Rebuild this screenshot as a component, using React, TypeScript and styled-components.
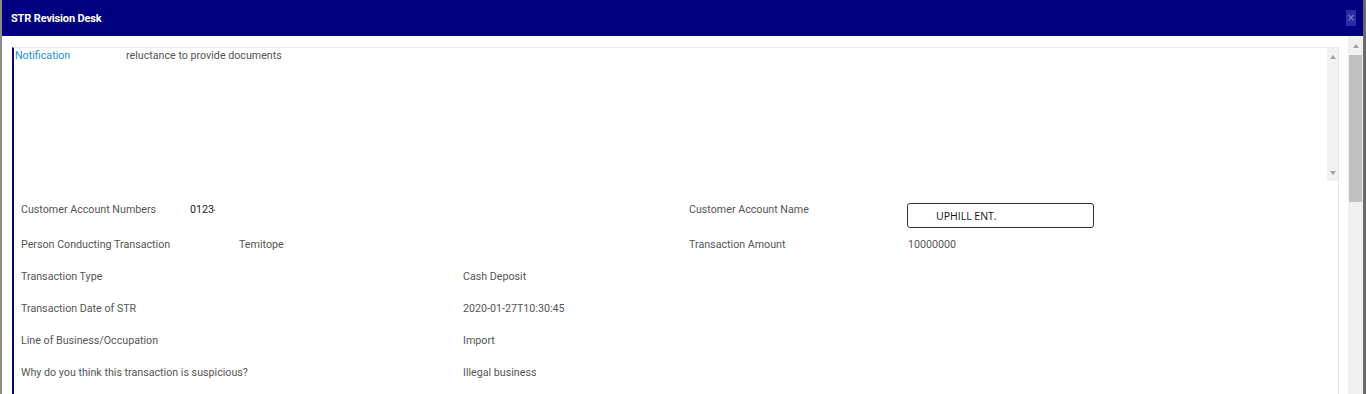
import React from "react";
import styled, { createGlobalStyle } from "styled-components";

const Global = createGlobalStyle`
  html, body { margin: 0; padding: 0; background: #ffffff; }
  body { font-family: Roboto, "Liberation Sans", Arial, sans-serif; }
  * { box-sizing: border-box; }
`;

const Window = styled.div`
  width: 1366px;
  height: 394px;
  display: flex;
  flex-direction: column;
  overflow: hidden;
  border-left: 2px solid #8c8c8c;
  border-right: 3px solid #6a6a6a;
  background: #ffffff;
`;

const Header = styled.header`
  height: 36px;
  flex: none;
  background: #000080;
  display: flex;
  align-items: center;
  justify-content: space-between;
  padding: 0 7px 0 9px;
`;

const Title = styled.h1`
  margin: 0;
  color: #ffffff;
  font-size: 11px;
  font-weight: 700;
  letter-spacing: -0.15px;
`;

const CloseButton = styled.button`
  width: 10px;
  height: 16px;
  padding: 0;
  border: none;
  background: #2b2ba6;
  color: #8a8abb;
  font-size: 10px;
  line-height: 16px;
  font-family: "DejaVu Sans", sans-serif;
  display: flex;
  align-items: center;
  justify-content: center;
`;

const Body = styled.div`
  flex: 1;
  display: flex;
  min-height: 0;
`;

const Main = styled.main`
  flex: 1;
  padding: 11px 9px 0 10px;
  min-width: 0;
`;

const Card = styled.section`
  height: 100%;
  border-left: 2px solid #0a0a6e;
  border-right: 1px solid #e6e6e6;
  border-top: 1px solid #e9e9e9;
`;

const NoteBox = styled.div`
  height: 133px;
  display: flex;
`;

const NoteContent = styled.div`
  flex: 1;
  display: flex;
  align-items: flex-start;
  padding: 1px 0 0 1px;
  font-size: 10.7px;
  line-height: 14px;
`;

const NoteLabel = styled.span`
  width: 111px;
  color: #1f8fd8;
`;

const NoteText = styled.span`
  color: #555555;
`;

const InnerScrollbar = styled.div`
  width: 11px;
  background: #f1f1f1;
  display: flex;
  flex-direction: column;
  justify-content: space-between;
  align-items: center;
  padding: 7px 0 6px;
`;

const Arrow = styled.span<{ $down?: boolean }>`
  width: 0;
  height: 0;
  border-left: 3.5px solid transparent;
  border-right: 3.5px solid transparent;
  ${(p) =>
    p.$down
      ? "border-top: 4px solid #a3a3a3;"
      : "border-bottom: 4px solid #a3a3a3;"}
`;

const Row = styled.div<{ $first?: boolean }>`
  display: flex;
  align-items: ${(p) => (p.$first ? "flex-start" : "center")};
  height: ${(p) => (p.$first ? "48px" : "32px")};
  padding: ${(p) => (p.$first ? "22px 0 0 7px" : "0 0 0 7px")};
  font-size: 10.7px;
  line-height: 14px;
  color: #555555;
`;

const Half = styled.div<{ $w?: number }>`
  display: flex;
  align-items: flex-start;
  width: ${(p) => (p.$w ? `${p.$w}px` : "auto")};
  flex: ${(p) => (p.$w ? "none" : "1")};
`;

const Label = styled.span<{ $w: number }>`
  width: ${(p) => p.$w}px;
  flex: none;
  white-space: nowrap;
`;

const Value = styled.span<{ $dark?: boolean; $clip?: number }>`
  color: ${(p) => (p.$dark ? "#222222" : "#555555")};
  white-space: nowrap;
  overflow: hidden;
  ${(p) => (p.$clip ? `width: ${p.$clip}px;` : "")}
`;

const NameInput = styled.div`
  width: 187px;
  height: 25px;
  border: 1px solid #333333;
  border-radius: 3px;
  padding-left: 28px;
  display: flex;
  align-items: center;
  font-family: "Open Sans", "Liberation Sans", sans-serif;
  font-size: 10.5px;
  color: #111111;
`;

const PageScrollbar = styled.div`
  width: 15px;
  flex: none;
  background: #f0f0f0;
  display: flex;
  flex-direction: column;
  align-items: center;
  padding-top: 8px;
`;

const Thumb = styled.div`
  width: 13px;
  height: 147px;
  margin-top: 7px;
  background: #c1c1c1;
`;

const simpleRows: [string, string][] = [
  ["Transaction Type", "Cash Deposit"],
  ["Transaction Date of STR", "2020-01-27T10:30:45"],
  ["Line of Business/Occupation", "Import"],
  ["Why do you think this transaction is suspicious?", "Illegal business"],
];

export default function App() {
  return (
    <>
      <Global />
      <Window>
        <Header>
          <Title>STR Revision Desk</Title>
          <CloseButton aria-label="close">×</CloseButton>
        </Header>
        <Body>
          <Main>
            <Card>
              <NoteBox>
                <NoteContent>
                  <NoteLabel>Notification</NoteLabel>
                  <NoteText>reluctance to provide documents</NoteText>
                </NoteContent>
                <InnerScrollbar>
                  <Arrow />
                  <Arrow $down />
                </InnerScrollbar>
              </NoteBox>
              <Row $first>
                <Half $w={668}>
                  <Label $w={169}>Customer Account Numbers</Label>
                  <Value $dark $clip={25}>0123456789</Value>
                </Half>
                <Half>
                  <Label $w={218}>Customer Account Name</Label>
                  <NameInput>UPHILL ENT.</NameInput>
                </Half>
              </Row>
              <Row>
                <Half $w={668}>
                  <Label $w={218}>Person Conducting Transaction</Label>
                  <Value>Temitope</Value>
                </Half>
                <Half>
                  <Label $w={219}>Transaction Amount</Label>
                  <Value>10000000</Value>
                </Half>
              </Row>
              {simpleRows.map(([l, v]) => (
                <Row key={l}>
                  <Label $w={442}>{l}</Label>
                  <Value>{v}</Value>
                </Row>
              ))}
            </Card>
          </Main>
          <PageScrollbar>
            <Arrow />
            <Thumb />
          </PageScrollbar>
        </Body>
      </Window>
    </>
  );
}
